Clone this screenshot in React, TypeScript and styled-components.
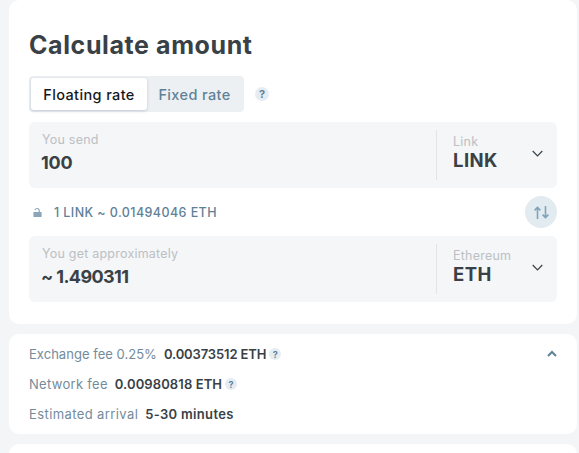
import styled, { createGlobalStyle } from 'styled-components';

const GlobalStyle = createGlobalStyle`
  html, body {
    margin: 0;
    height: 100%;
    overflow: hidden;
    background: #f3f5f6;
    font-family: 'Inter', 'Liberation Sans', sans-serif;
  }
`;

const Page = styled.div`
  display: flex;
  flex-direction: column;
  gap: 10px;
  padding: 0 2px 0 9px;
  height: 453px;
  box-sizing: border-box;
  overflow: hidden;
`;

const Card = styled.section`
  background: #fff;
  border-radius: 10px;
  flex-shrink: 0;
`;

const CalculatorCard = styled(Card)`
  height: 324px;
  padding: 30px 20px 0;
  box-sizing: border-box;
`;

const Title = styled.h1`
  margin: 0;
  font-size: 25px;
  line-height: 30px;
  font-weight: 700;
  color: #394147;
  letter-spacing: 0.6px;
`;

const RateRow = styled.div`
  display: flex;
  align-items: center;
  gap: 11px;
  margin-top: 16px;
`;

const RateToggle = styled.div`
  display: flex;
  width: 215px;
  height: 36px;
  padding: 2px;
  box-sizing: border-box;
  background: #ecf0f3;
  border-radius: 4px;
`;

const RateTab = styled.div<{ $active?: boolean }>`
  display: flex;
  align-items: center;
  justify-content: center;
  width: ${(p) => (p.$active ? '116px' : '95px')};
  font-size: 14.5px;
  font-weight: 500;
  letter-spacing: 0.38px;
  border-radius: 3px;
  color: ${(p) => (p.$active ? '#15181b' : '#5f8197')};
  background: ${(p) => (p.$active ? '#fff' : 'transparent')};
  box-shadow: ${(p) => (p.$active ? '0 1px 3px rgba(60, 80, 100, 0.25)' : 'none')};
`;

const Hint = styled.span<{ $size?: number }>`
  display: inline-flex;
  align-items: center;
  justify-content: center;
  width: ${(p) => p.$size ?? 14}px;
  height: ${(p) => p.$size ?? 14}px;
  border-radius: 50%;
  background: #e6edf2;
  color: #5f8197;
  font-size: ${(p) => (p.$size ?? 14) - 3}px;
  font-weight: 700;
  flex-shrink: 0;
`;

const Field = styled.div`
  display: flex;
  align-items: center;
  height: 66px;
  background: #f4f6f8;
  border-radius: 6px;
`;

const SendField = styled(Field)`
  margin-top: 10px;
`;

const AmountBox = styled.div`
  flex: 1;
  padding: 11px 13px 0;
  height: 100%;
  box-sizing: border-box;
`;

const SmallLabel = styled.div`
  font-size: 12.5px;
  line-height: 14px;
  color: #bcc0c4;
  letter-spacing: 0.22px;
`;

const Amount = styled.div<{ $tracking: number }>`
  margin: 4px 0 0 -1px;
  font-size: 18px;
  line-height: 24px;
  font-weight: 700;
  color: #394147;
  letter-spacing: ${(p) => p.$tracking}px;
`;

const CurrencyBox = styled.div`
  display: flex;
  align-items: center;
  width: 121px;
  height: 50px;
  box-sizing: border-box;
  padding: 0 14px 4px 16px;
  border-left: 1px solid #e1e4e7;
`;

const CurrencyText = styled.div`
  flex: 1;
  margin-top: -2px;
`;

const CurrencyCode = styled.div`
  margin-top: 1px;
  font-size: 18.5px;
  line-height: 20px;
  font-weight: 700;
  color: #394147;
  letter-spacing: 0.45px;
`;

const ExchangeRow = styled.div`
  display: flex;
  align-items: center;
  height: 32px;
  margin: 8px 0;
`;

const LockSlot = styled.span`
  display: flex;
  width: 25px;
  padding-left: 4px;
  box-sizing: border-box;
`;

const ExchangeText = styled.span`
  flex: 1;
  font-size: 12.5px;
  font-weight: 500;
  color: #5f8197;
  letter-spacing: 0.42px;
`;

const SwapButton = styled.button`
  display: flex;
  align-items: center;
  justify-content: center;
  width: 32px;
  height: 32px;
  padding: 0;
  border: none;
  border-radius: 50%;
  background: #e2ebf0;
`;

const FeesCard = styled(Card)`
  display: flex;
  justify-content: space-between;
  height: 100px;
  padding: 11px 20px 0;
  box-sizing: border-box;
`;

const FeeList = styled.div`
  display: flex;
  flex-direction: column;
  gap: 12px;
`;

const FeeRow = styled.div`
  display: flex;
  align-items: center;
  height: 18px;
  font-size: 13px;
  gap: 7px;
`;

const FeeLabel = styled.span<{ $tracking: number }>`
  color: #748b9c;
  letter-spacing: ${(p) => p.$tracking}px;
`;

const FeeValue = styled.span<{ $tracking: number }>`
  display: inline-flex;
  align-items: center;
  gap: 3px;
  font-weight: 600;
  color: #394147;
  letter-spacing: ${(p) => p.$tracking}px;
`;

const CollapseIcon = styled.svg`
  margin: 5px 0 0;
`;

const BottomCard = styled(Card)`
  height: 40px;
`;

const Chevron = () => (
  <svg width="11" height="7" viewBox="0 0 11 7" fill="none">
    <path d="M.7 1 5.5 5.8 10.3 1" stroke="#394147" strokeWidth="1.2" />
  </svg>
);

const Lock = () => (
  <svg width="9" height="9" viewBox="0 0 9 9">
    <path
      d="M1 4h4.6V2.6C5.6 1.6 5 1 4.2 1c-.7 0-1.2.4-1.4 1H1.6C1.9.8 2.9 0 4.2 0c1.5 0 2.6 1.1 2.6 2.6V4H8a.6.6 0 0 1 .6.6v3.8A.6.6 0 0 1 8 9H1a.6.6 0 0 1-.6-.6V4.6A.6.6 0 0 1 1 4Z"
      fill="#8ba6b8"
    />
  </svg>
);

const SwapIcon = () => (
  <svg width="15" height="13" viewBox="0 0 15 13" fill="none" stroke="#7fa3ba" strokeWidth="1.6">
    <path d="M3.5 13V1.5M.6 4.4l2.9-2.9 2.9 2.9" />
    <path d="M11.5 0v11.5M8.6 8.6l2.9 2.9 2.9-2.9" />
  </svg>
);

const App = () => (
  <>
    <GlobalStyle />
    <Page>
      <CalculatorCard>
        <Title>Calculate amount</Title>
        <RateRow>
          <RateToggle>
            <RateTab $active>Floating rate</RateTab>
            <RateTab>Fixed rate</RateTab>
          </RateToggle>
          <Hint>?</Hint>
        </RateRow>
        <SendField>
          <AmountBox>
            <SmallLabel>You send</SmallLabel>
            <Amount $tracking={-0.2}>100</Amount>
          </AmountBox>
          <CurrencyBox>
            <CurrencyText>
              <SmallLabel>Link</SmallLabel>
              <CurrencyCode>LINK</CurrencyCode>
            </CurrencyText>
            <Chevron />
          </CurrencyBox>
        </SendField>
        <ExchangeRow>
          <LockSlot>
            <Lock />
          </LockSlot>
          <ExchangeText>1 LINK ~ 0.01494046 ETH</ExchangeText>
          <SwapButton aria-label="Swap currencies">
            <SwapIcon />
          </SwapButton>
        </ExchangeRow>
        <Field>
          <AmountBox>
            <SmallLabel>You get approximately</SmallLabel>
            <Amount $tracking={-0.6}>~ 1.490311</Amount>
          </AmountBox>
          <CurrencyBox>
            <CurrencyText>
              <SmallLabel>Ethereum</SmallLabel>
              <CurrencyCode>ETH</CurrencyCode>
            </CurrencyText>
            <Chevron />
          </CurrencyBox>
        </Field>
      </CalculatorCard>
      <FeesCard>
        <FeeList>
          <FeeRow>
            <FeeLabel $tracking={0.03}>Exchange fee 0.25%</FeeLabel>
            <FeeValue $tracking={-0.13}>
              0.00373512 ETH <Hint $size={12}>?</Hint>
            </FeeValue>
          </FeeRow>
          <FeeRow>
            <FeeLabel $tracking={0.3}>Network fee</FeeLabel>
            <FeeValue $tracking={0.1}>
              0.00980818 ETH <Hint $size={12}>?</Hint>
            </FeeValue>
          </FeeRow>
          <FeeRow>
            <FeeLabel $tracking={0.4}>Estimated arrival</FeeLabel>
            <FeeValue $tracking={0.32}>5-30 minutes</FeeValue>
          </FeeRow>
        </FeeList>
        <CollapseIcon width="10" height="8" viewBox="0 0 10 8" fill="none">
          <path d="M1 6 5 2l4 4" stroke="#5f8197" strokeWidth="2" />
        </CollapseIcon>
      </FeesCard>
      <BottomCard />
    </Page>
  </>
);

export default App;
